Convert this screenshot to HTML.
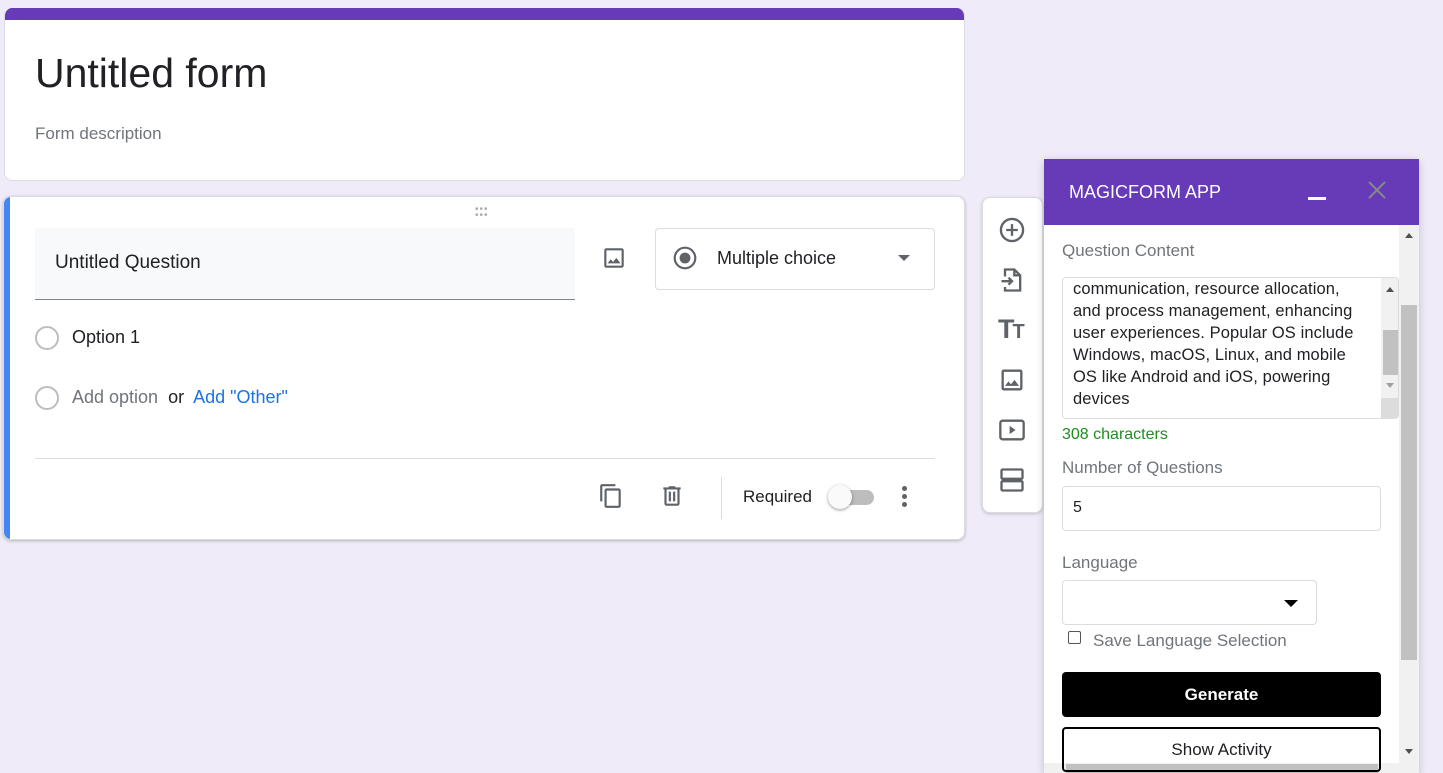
<!DOCTYPE html>
<html><head><meta charset="utf-8"><style>
*{box-sizing:border-box;margin:0;padding:0}
body{width:1443px;height:773px;overflow:hidden;background:#f0ebf8;font-family:"Liberation Sans",Arial,sans-serif;position:relative;color:#202124}
.abs{position:absolute}
.card{position:absolute;background:#fff;border-radius:8px;border:1px solid #dadce0;overflow:hidden}
svg{position:absolute}
</style></head><body>

<div class="card" style="left:4px;top:8px;width:961px;height:173px;border-top:none">
 <div class="abs" style="left:0;top:0;width:100%;height:12px;background:#673ab7"></div>
 <div class="abs" style="left:30px;top:42px;font-size:41px;color:#202124">Untitled form</div>
 <div class="abs" style="left:30px;top:116px;font-size:17px;color:#70757a">Form description</div>
</div>

<div class="card" style="left:3px;top:196px;width:962px;height:344px;box-shadow:0 1px 3px rgba(0,0,0,.25)">
 <div class="abs" style="left:0;top:0;width:6px;height:100%;background:#4285f4"></div>
 <div class="abs" style="left:471px;top:10px;color:#aaa;font-size:10px;letter-spacing:1px;line-height:6px">•••<br>•••</div>
 <div class="abs" style="left:31px;top:31px;width:540px;height:72px;background:#f8f9fa;border-bottom:1px solid #80868b"></div>
 <div class="abs" style="left:51px;top:55px;font-size:19px">Untitled Question</div>
 <svg style="left:597px;top:48px" width="26" height="26" viewBox="0 0 24 24"><path fill="#5f6368" d="M19 5v14H5V5h14m0-2H5c-1.1 0-2 .9-2 2v14c0 1.1.9 2 2 2h14c1.1 0 2-.9 2-2V5c0-1.1-.9-2-2-2zm-4.86 8.86l-3 3.87L9 13.14 6 17h12l-3.860-5.14z"/></svg>
 <div class="abs" style="left:651px;top:31px;width:280px;height:62px;border:1px solid #dadce0;border-radius:4px"></div>
 <svg style="left:668px;top:48px" width="26" height="26" viewBox="0 0 24 24"><circle cx="12" cy="12" r="9.5" fill="none" stroke="#5f6368" stroke-width="2"/><circle cx="12" cy="12" r="5" fill="#5f6368"/></svg>
 <div class="abs" style="left:713px;top:51px;font-size:18px">Multiple choice</div>
 <div class="abs" style="left:894px;top:58px;width:0;height:0;border-left:6px solid transparent;border-right:6px solid transparent;border-top:6px solid #5f6368"></div>
 <div class="abs" style="left:31px;top:129px;width:24px;height:24px;border:2px solid #bdbdbd;border-radius:50%"></div>
 <div class="abs" style="left:68px;top:130px;font-size:18px">Option 1</div>
 <div class="abs" style="left:31px;top:189px;width:24px;height:24px;border:2px solid #bdbdbd;border-radius:50%"></div>
 <div class="abs" style="left:68px;top:190px;font-size:18px;color:#70757a">Add option <span style="color:#202124">&nbsp;or&nbsp;</span> <span style="color:#1a73e8">Add "Other"</span></div>
 <div class="abs" style="left:31px;top:261px;width:900px;height:1px;background:#dadce0"></div>
 <svg style="left:594px;top:286px" width="26" height="26" viewBox="0 0 24 24"><path fill="#5f6368" d="M16 1H4c-1.1 0-2 .9-2 2v14h2V3h12V1zm3 4H8c-1.1 0-2 .9-2 2v14c0 1.1.9 2 2 2h11c1.1 0 2-.9 2-2V7c0-1.1-.9-2-2-2zm0 16H8V7h11v14z"/></svg>
 <svg style="left:655px;top:286px" width="26" height="26" viewBox="0 0 24 24"><path fill="#5f6368" d="M15 4V3H9v1H4v2h1v13c0 1.1.9 2 2 2h10c1.1 0 2-.9 2-2V6h1V4h-5zm2 15H7V6h10v13zM9 8h2v9H9zm4 0h2v9h-2z"/></svg>
 <div class="abs" style="left:717px;top:280px;width:1px;height:42px;background:#dadce0"></div>
 <div class="abs" style="left:739px;top:290px;font-size:17px">Required</div>
 <div class="abs" style="left:828px;top:293px;width:42px;height:15px;border-radius:8px;background:#bdbdbd"></div>
 <div class="abs" style="left:824px;top:288px;width:24px;height:24px;border-radius:50%;background:#fafafa;box-shadow:0 1px 3px rgba(0,0,0,.4)"></div>
 <div class="abs" style="left:898px;top:289px;width:5px;height:5px;border-radius:50%;background:#5f6368;box-shadow:0 8px 0 #5f6368,0 16px 0 #5f6368"></div>
</div>

<div class="card" style="left:982px;top:197px;width:61px;height:316px;box-shadow:0 1px 3px rgba(0,0,0,.2)">
 <svg style="left:15px;top:18px" width="28" height="28" viewBox="0 0 24 24"><circle cx="12" cy="12" r="9.5" fill="none" stroke="#5f6368" stroke-width="2"/><path d="M12 7v10M7 12h10" stroke="#5f6368" stroke-width="2"/></svg>
 <svg style="left:15px;top:68px" width="28" height="28" viewBox="0 0 24 24"><path fill="none" stroke="#5f6368" stroke-width="2" d="M6 9V3h8l5 5v13H6v-3M14 3v5h5M3 13h9M9 10l3 3-3 3"/></svg>
 <div class="abs" style="left:15px;top:116px;font-size:27px;font-weight:bold;color:#5f6368;letter-spacing:-2px">T<span style="font-size:20px">T</span></div>
 <svg style="left:15px;top:168px" width="28" height="28" viewBox="0 0 24 24"><path fill="#5f6368" d="M19 5v14H5V5h14m0-2H5c-1.1 0-2 .9-2 2v14c0 1.1.9 2 2 2h14c1.1 0 2-.9 2-2V5c0-1.1-.9-2-2-2zm-4.86 8.86l-3 3.87L9 13.14 6 17h12l-3.86-5.14z"/></svg>
 <svg style="left:15px;top:218px" width="28" height="28" viewBox="0 0 24 24"><rect x="2" y="4" width="20" height="16" rx="2" fill="none" stroke="#5f6368" stroke-width="2"/><path d="M10 8.5v7l5-3.5z" fill="#5f6368"/></svg>
 <svg style="left:15px;top:268px" width="28" height="28" viewBox="0 0 24 24"><rect x="3" y="3" width="18" height="8" rx="1" fill="none" stroke="#5f6368" stroke-width="2"/><rect x="3" y="13" width="18" height="8" rx="1" fill="none" stroke="#5f6368" stroke-width="2"/></svg>
</div>

<div class="abs" style="left:1044px;top:159px;width:375px;height:614px;background:#fff;box-shadow:0 2px 8px rgba(0,0,0,.2);overflow:hidden">
 <div class="abs" style="left:0;top:0;width:375px;height:66px;background:#673ab7"></div>
 <div class="abs" style="left:25px;top:23px;font-size:18px;color:#fff">MAGICFORM APP</div>
 <div class="abs" style="left:264px;top:38px;width:18px;height:3px;background:#fff"></div>
 <svg style="left:323px;top:21px" width="20" height="20"><path d="M2 2L18 18M18 2L2 18" stroke="#888" stroke-width="2"/></svg>
 <div class="abs" style="left:355px;top:66px;width:20px;height:548px;background:#f1f1f1"></div>
 <div class="abs" style="left:357px;top:146px;width:16px;height:355px;background:#c1c1c1"></div>
 <div class="abs" style="left:361px;top:74px;border-left:4px solid transparent;border-right:4px solid transparent;border-bottom:5px solid #505050"></div>
 <div class="abs" style="left:361px;top:590px;border-left:4px solid transparent;border-right:4px solid transparent;border-top:5px solid #505050"></div>
 <div class="abs" style="left:0;top:604px;width:355px;height:10px;background:#f1f1f1"></div>
 <div class="abs" style="left:22px;top:605px;width:312px;height:9px;background:#c1c1c1"></div>

 <div class="abs" style="left:18px;top:82px;font-size:17px;color:#70757a">Question Content</div>
 <div class="abs" style="left:18px;top:118px;width:337px;height:142px;border:1px solid #dadce0;border-radius:4px;overflow:hidden">
  <div class="abs" style="left:10px;top:0;font-size:16.5px;line-height:22px;color:#202124;white-space:nowrap;letter-spacing:0.1px">communication, resource allocation,<br>and process management, enhancing<br>user experiences. Popular OS include<br>Windows, macOS, Linux, and mobile<br>OS like Android and iOS, powering<br>devices</div>
  <div class="abs" style="left:318px;top:0;width:18px;height:140px;background:#f1f1f1"></div>
  <div class="abs" style="left:320px;top:52px;width:15px;height:45px;background:#c1c1c1"></div>
  <div class="abs" style="left:323px;top:9px;border-left:4px solid transparent;border-right:4px solid transparent;border-bottom:5px solid #505050"></div>
  <div class="abs" style="left:323px;top:105px;border-left:4px solid transparent;border-right:4px solid transparent;border-top:5px solid #a0a0a0"></div>
  <div class="abs" style="left:318px;top:120px;width:18px;height:20px;background:#dcdcdc"></div>
 </div>
 <div class="abs" style="left:18px;top:267px;font-size:16px;color:#1e8e1e">308 characters</div>
 <div class="abs" style="left:18px;top:299px;font-size:17px;color:#70757a">Number of Questions</div>
 <div class="abs" style="left:18px;top:327px;width:319px;height:45px;border:1px solid #dadce0;border-radius:4px;padding:12px 10px;font-size:16px">5</div>
 <div class="abs" style="left:18px;top:394px;font-size:17px;color:#70757a">Language</div>
 <div class="abs" style="left:18px;top:421px;width:255px;height:45px;border:1px solid #dadce0;border-radius:4px"></div>
 <div class="abs" style="left:240px;top:441px;border-left:7px solid transparent;border-right:7px solid transparent;border-top:7px solid #000"></div>
 <div class="abs" style="left:24px;top:472px;width:13px;height:13px;border:1px solid #555;border-radius:2px"></div>
 <div class="abs" style="left:49px;top:472px;font-size:17px;color:#70757a">Save Language Selection</div>
 <div class="abs" style="left:18px;top:513px;width:319px;height:45px;background:#000;border-radius:4px;color:#fff;font-size:17px;font-weight:bold;text-align:center;line-height:45px">Generate</div>
 <div class="abs" style="left:18px;top:568px;width:319px;height:45px;border:2px solid #000;border-radius:4px;font-size:17px;text-align:center;line-height:41px">Show Activity</div>
</div>
</body></html>
